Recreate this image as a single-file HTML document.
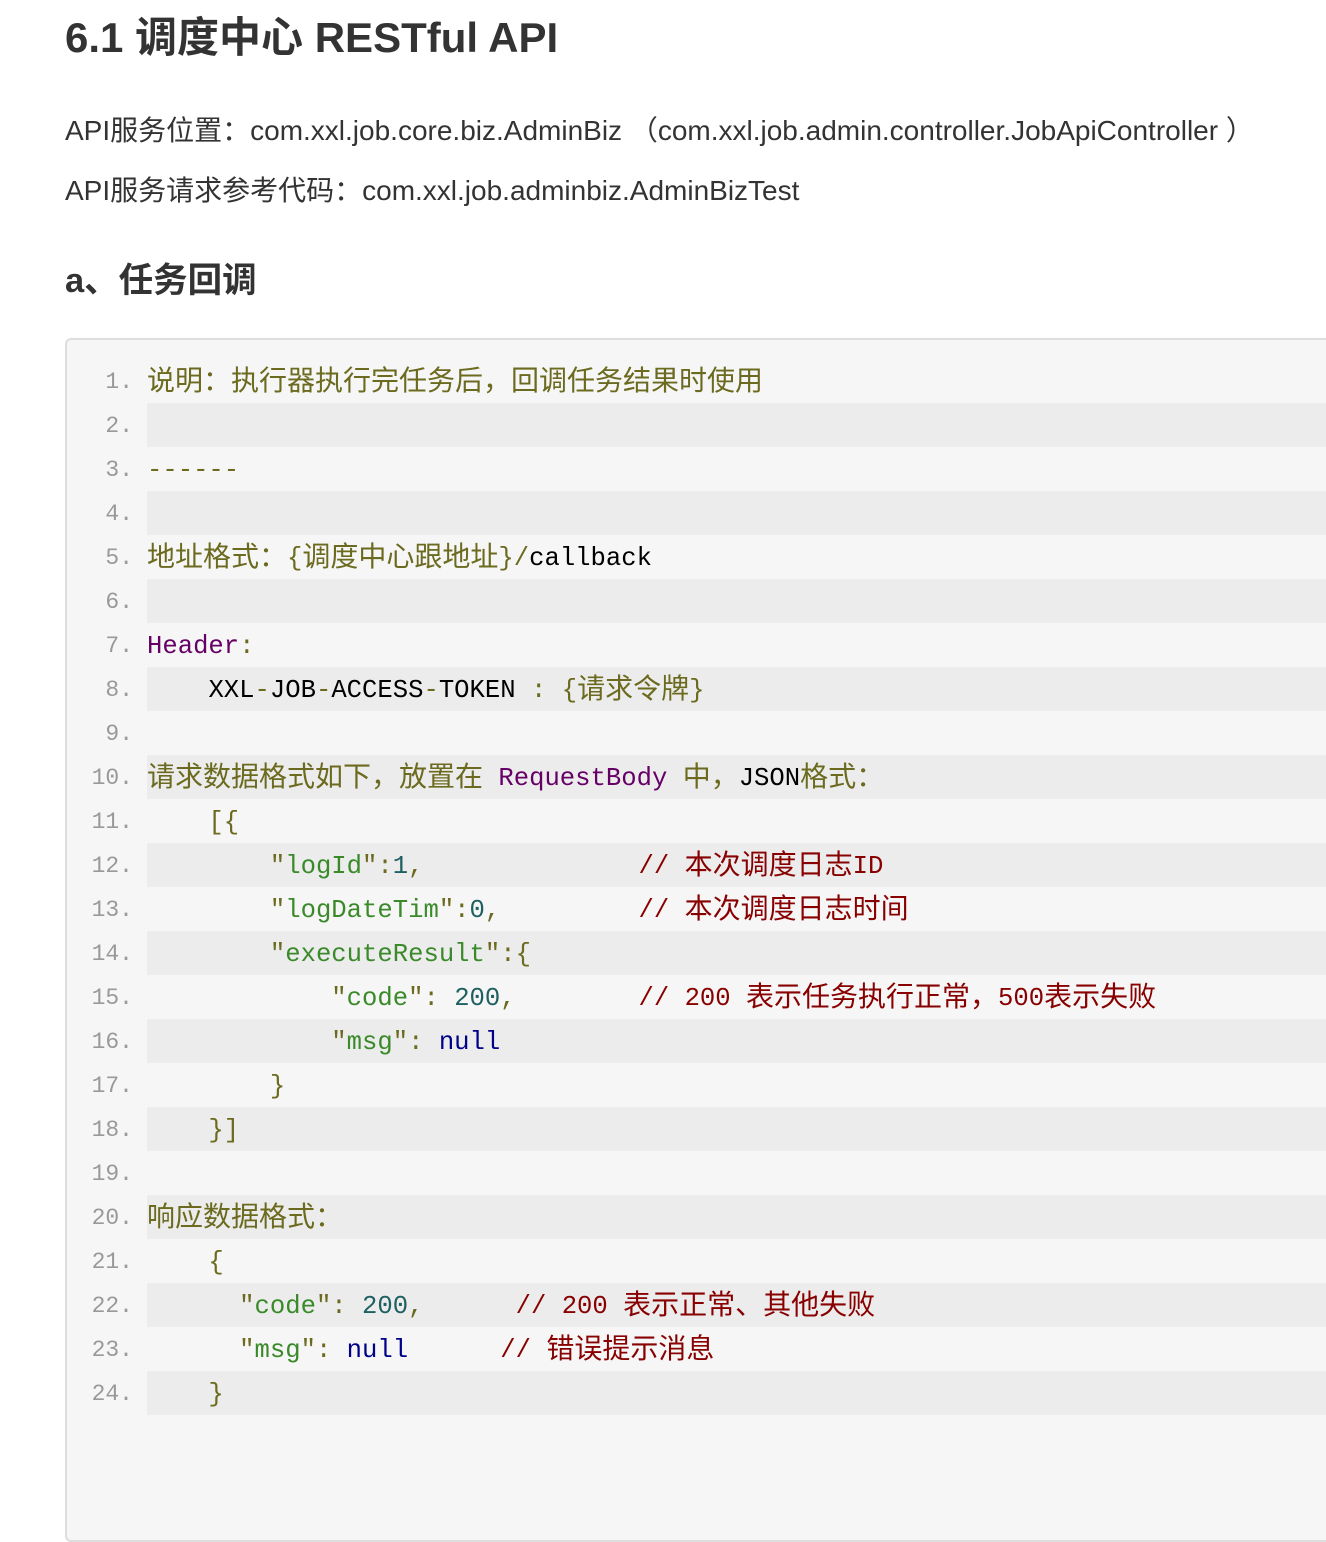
<!DOCTYPE html>
<html><head><meta charset="utf-8"><style>
html,body{margin:0;background:#fff;width:1326px;height:1420px;overflow:hidden;font-family:"Liberation Sans","Noto Sans CJK SC",sans-serif;color:#333}
h1{position:absolute;left:65px;top:12px;margin:0;font-size:42px;font-weight:bold;line-height:52px;color:#333}
p{position:absolute;left:65px;margin:0;font-size:28px;line-height:36px;white-space:nowrap}
h3{position:absolute;left:65px;top:260px;margin:0;font-size:34.5px;font-weight:bold;line-height:42px}
.box{position:absolute;left:65px;top:338px;width:1300px;height:1200px;background:#f6f6f6;border:2px solid #ddd;border-radius:6px;overflow:hidden}
.row{position:absolute;left:0;width:1400px;height:44px;line-height:44px;white-space:pre;font-family:"Liberation Mono","Noto Sans CJK SC",monospace;font-size:25.6px}
.n{position:absolute;left:0;top:1px;width:66px;text-align:right;color:#999;font-size:23px;line-height:44px}
.c{position:absolute;left:80px;top:0;height:44px;right:0;color:#6b6a1f;line-height:47px}
.row:nth-child(even) .c{background:#ececec}
i{font-style:normal;font-size:28px;font-family:"Noto Sans CJK SC",sans-serif;line-height:1;vertical-align:-1px}
.k{color:#000}.p{color:#660066}.s{color:#3a8a2a}.d{color:#1f6060}.u{color:#000088}.m{color:#880000}
</style></head><body>
<h1>6.1 调度中心 RESTful API</h1>
<p style="top:113px">API服务位置：com.xxl.job.core.biz.AdminBiz （com.xxl.job.admin.controller.JobApiController ）</p>
<p style="top:173px">API服务请求参考代码：com.xxl.job.adminbiz.AdminBizTest</p>
<h3>a、任务回调</h3>
<div class="box"><div style="position:absolute;left:0;top:19px">
<div class="row" style="top:0"><span class="n">1.</span><span class="c"><i>说明：执行器执行完任务后，回调任务结果时使用</i></span></div>
<div class="row" style="top:44px"><span class="n">2.</span><span class="c"></span></div>
<div class="row" style="top:88px"><span class="n">3.</span><span class="c">------</span></div>
<div class="row" style="top:132px"><span class="n">4.</span><span class="c"></span></div>
<div class="row" style="top:176px"><span class="n">5.</span><span class="c"><i>地址格式：</i>{<i>调度中心跟地址</i>}/<span class="k">callback</span></span></div>
<div class="row" style="top:220px"><span class="n">6.</span><span class="c"></span></div>
<div class="row" style="top:264px"><span class="n">7.</span><span class="c"><span class="p">Header</span>:</span></div>
<div class="row" style="top:308px"><span class="n">8.</span><span class="c">    <span class="k">XXL</span>-<span class="k">JOB</span>-<span class="k">ACCESS</span>-<span class="k">TOKEN</span> : {<i>请求令牌</i>}</span></div>
<div class="row" style="top:352px"><span class="n">9.</span><span class="c"></span></div>
<div class="row" style="top:396px"><span class="n">10.</span><span class="c"><i>请求数据格式如下，放置在</i> <span class="p">RequestBody</span> <i>中，</i><span class="k">JSON</span><i>格式：</i></span></div>
<div class="row" style="top:440px"><span class="n">11.</span><span class="c">    [{</span></div>
<div class="row" style="top:484px"><span class="n">12.</span><span class="c">        "<span class="s">logId</span>":<span class="d">1</span>,              <span class="m">// <i>本次调度日志</i>ID</span></span></div>
<div class="row" style="top:528px"><span class="n">13.</span><span class="c">        "<span class="s">logDateTim</span>":<span class="d">0</span>,         <span class="m">// <i>本次调度日志时间</i></span></span></div>
<div class="row" style="top:572px"><span class="n">14.</span><span class="c">        "<span class="s">executeResult</span>":{</span></div>
<div class="row" style="top:616px"><span class="n">15.</span><span class="c">            "<span class="s">code</span>": <span class="d">200</span>,        <span class="m">// 200 <i>表示任务执行正常，</i>500<i>表示失败</i></span></span></div>
<div class="row" style="top:660px"><span class="n">16.</span><span class="c">            "<span class="s">msg</span>": <span class="u">null</span></span></div>
<div class="row" style="top:704px"><span class="n">17.</span><span class="c">        }</span></div>
<div class="row" style="top:748px"><span class="n">18.</span><span class="c">    }]</span></div>
<div class="row" style="top:792px"><span class="n">19.</span><span class="c"></span></div>
<div class="row" style="top:836px"><span class="n">20.</span><span class="c"><i>响应数据格式：</i></span></div>
<div class="row" style="top:880px"><span class="n">21.</span><span class="c">    {</span></div>
<div class="row" style="top:924px"><span class="n">22.</span><span class="c">      "<span class="s">code</span>": <span class="d">200</span>,      <span class="m">// 200 <i>表示正常、其他失败</i></span></span></div>
<div class="row" style="top:968px"><span class="n">23.</span><span class="c">      "<span class="s">msg</span>": <span class="u">null</span>      <span class="m">// <i>错误提示消息</i></span></span></div>
<div class="row" style="top:1012px"><span class="n">24.</span><span class="c">    }</span></div>
<div class="row" style="top:1056px"><span class="n"></span><span class="c"></span></div>
</div></div>
</body></html>
